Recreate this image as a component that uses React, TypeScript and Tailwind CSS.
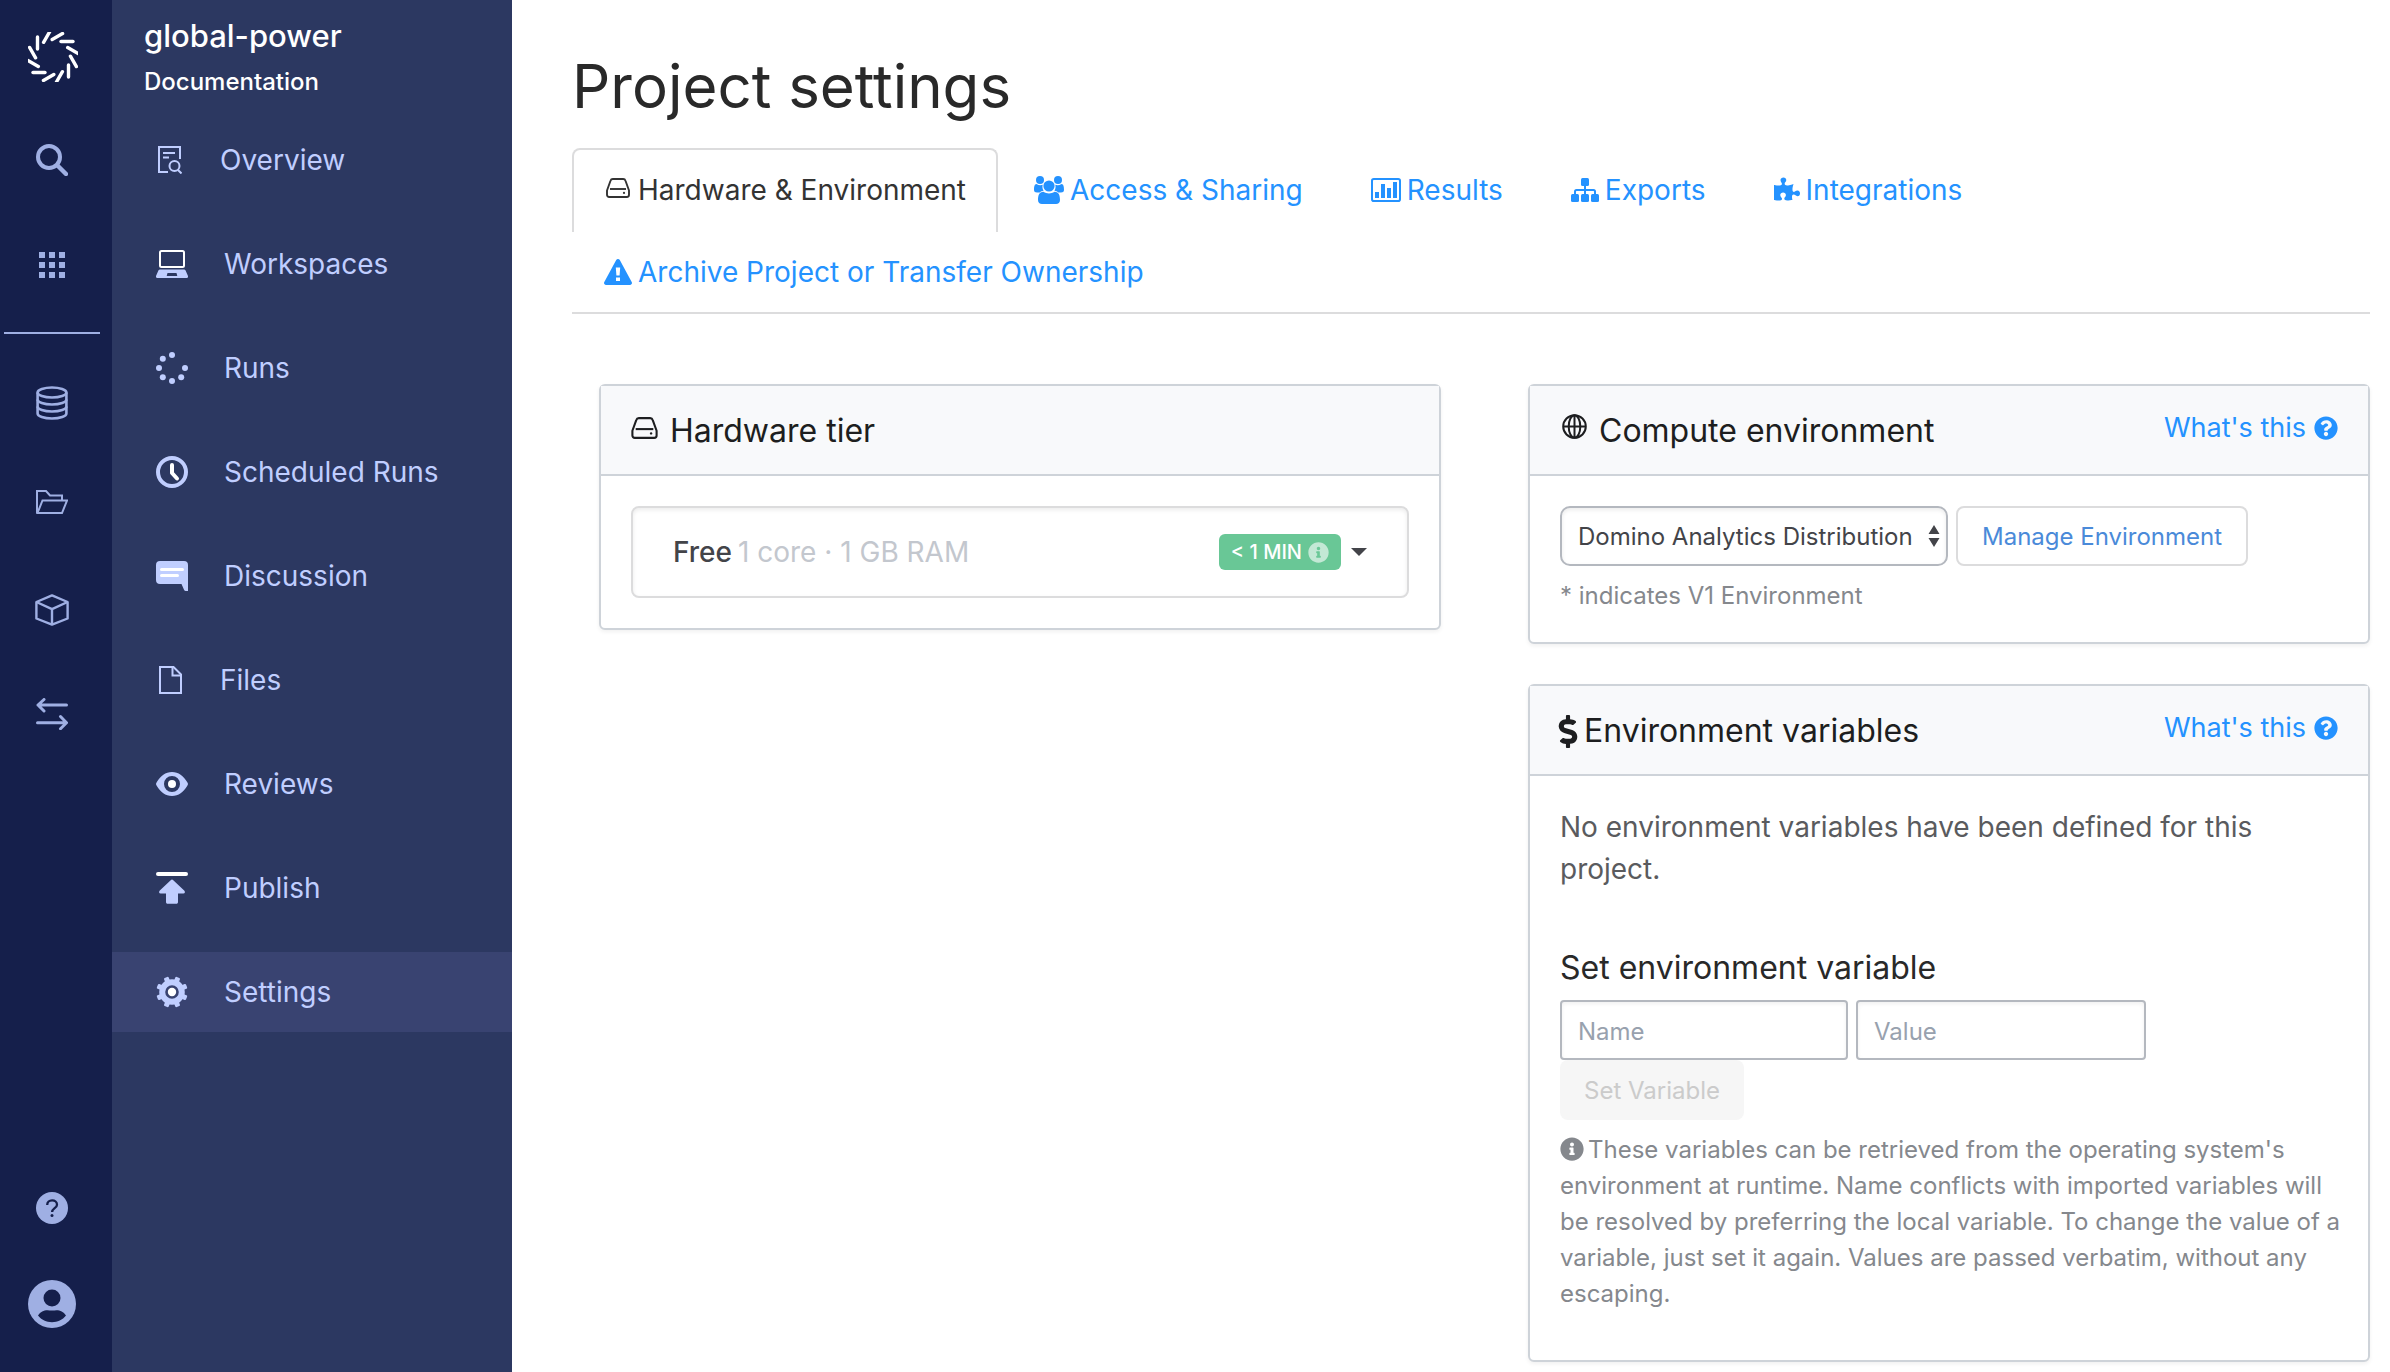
import type { ReactNode } from "react";
import { FaDollarSign, FaInfoCircle, FaPuzzlePiece, FaQuestionCircle } from "react-icons/fa";

/* ---------- logo + rail icons ---------- */

function Logo() {
  const angles = [0, 30, 60, 90, 120, 150, 180, 210, 240, 270, 300, 330];
  return (
    <svg viewBox="0 0 50 50" className="h-[50px] w-[50px]" aria-hidden="true">
      {angles.map((a) => (
        <line
          key={a}
          x1="33"
          y1="9.5"
          x2="45"
          y2="9.5"
          transform={`rotate(${a} 25 25)`}
          stroke="#fff"
          strokeWidth="3.4"
          strokeLinecap="round"
        />
      ))}
    </svg>
  );
}

function SearchIcon() {
  return (
    <svg viewBox="0 0 32 32" className="h-8 w-8" fill="none" stroke="currentColor" aria-hidden="true">
      <circle cx="13" cy="13" r="11" strokeWidth="4" />
      <path d="M21.5 21.5 30 30" strokeWidth="4.4" strokeLinecap="round" />
    </svg>
  );
}

function GridIcon() {
  const steps = [0, 10, 20];
  return (
    <svg viewBox="0 0 26 26" className="h-[26px] w-[26px]" fill="currentColor" aria-hidden="true">
      {steps.map((y) => steps.map((x) => <rect key={`${x}-${y}`} x={x} y={y} width="6" height="6" />))}
    </svg>
  );
}

function DatabaseIcon() {
  return (
    <svg viewBox="0 0 32 34" className="h-[34px] w-8" fill="none" stroke="currentColor" strokeWidth="2.6" aria-hidden="true">
      <ellipse cx="16" cy="6.5" rx="14.4" ry="5" />
      <path d="M1.6 6.5v21c0 2.800 6.400 5 14.400 5s14.400-2.200 14.400-5v-21" />
      <path d="M1.600 13.500c0 2.800 6.400 5 14.400 5s14.400-2.200 14.400-5" />
      <path d="M1.600 20.500c0 2.800 6.400 5 14.400 5s14.400-2.200 14.400-5" />
    </svg>
  );
}

function FolderIcon() {
  return (
    <svg viewBox="0 0 32 24" className="h-6 w-8" fill="none" stroke="currentColor" strokeWidth="2" aria-hidden="true">
      <path d="M1 23V1h9l4 4.500h12V10" />
      <path d="M1.500 23 6.500 10.500h24.500L26 23z" />
    </svg>
  );
}

function CubeIcon() {
  return (
    <svg viewBox="0 0 34 32" className="h-8 w-[34px]" fill="none" stroke="currentColor" strokeWidth="2.4" strokeLinejoin="round" aria-hidden="true">
      <path d="M17 1.400 32.600 8v16.500L17 30.600 1.400 24.500V8z" />
      <path d="M1.400 8 17 15.200 32.600 8M17 15.200v15.400" />
    </svg>
  );
}

function SwapIcon() {
  return (
    <svg viewBox="0 0 32 32" className="h-8 w-8" fill="none" stroke="currentColor" strokeWidth="3" strokeLinecap="round" strokeLinejoin="round" aria-hidden="true">
      <path d="M30.500 7H2M8 1.500 2 7l6 6" />
      <path d="M1.500 24.700H30M24.500 18.500l6 6.200-6 6" />
    </svg>
  );
}

function HelpIcon() {
  return (
    <svg viewBox="0 0 32 32" className="h-8 w-8" fill="none" aria-hidden="true">
      <circle cx="16" cy="16" r="16" fill="currentColor" />
      <path d="M11.200 13c0-2.700 2.100-4.600 4.900-4.600s4.900 1.800 4.900 4.300c0 3.300-4.900 3.600-4.900 7.300" stroke="#151f4b" strokeWidth="2.300" />
      <circle cx="16" cy="23.600" r="1.500" fill="#151f4b" />
    </svg>
  );
}

function AvatarIcon() {
  return (
    <svg viewBox="0 0 48 48" className="h-12 w-12" aria-hidden="true">
      <circle cx="24" cy="24" r="24" fill="currentColor" />
      <circle cx="24" cy="18" r="8.500" fill="#151f4b" />
      <path d="M10 35.500c3.500-5.500 8-6 14-4.900 6-1.100 10.500-.6 14 4.900-3.500 4.500-8.500 6.700-14 6.700s-10.500-2.200-14-6.700z" fill="#151f4b" />
    </svg>
  );
}

/* ---------- project nav icons ---------- */

function OverviewIcon() {
  return (
    <svg viewBox="0 0 24 28" className="h-7 w-6" fill="none" stroke="currentColor" strokeWidth="2" aria-hidden="true">
      <path d="M10 26H1V1h21v12M5 7h12M5 11.500h6" />
      <circle cx="16.500" cy="20" r="5" />
      <path d="m20 24 3.500 3.500" />
    </svg>
  );
}

function WorkspacesIcon() {
  return (
    <svg viewBox="0 0 32 28" className="h-7 w-8" aria-hidden="true">
      <rect x="4" y="1" width="24" height="16" rx="1.500" fill="none" stroke="#fff" strokeWidth="2" />
      <path fillRule="evenodd" fill="currentColor" d="M4 19.500h24c.8 0 1.300.3 1.600 1L32 26c.4 1.200-.2 2-1.500 2h-29C.2 28-.4 27.200 0 26l2.400-5.500c.3-.7.800-1 1.600-1zM11.500 23l-.8 3h10.600l-.8-3z" />
    </svg>
  );
}

function RunsIcon() {
  return (
    <svg viewBox="0 0 32 32" className="h-8 w-8" fill="currentColor" aria-hidden="true">
      <circle cx="16" cy="3" r="3" />
      <circle cx="6.800" cy="6.800" r="3" />
      <circle cx="3" cy="16" r="3" />
      <circle cx="6.800" cy="25.200" r="3" />
      <circle cx="16" cy="29" r="3" />
      <circle cx="25.200" cy="25.200" r="3" />
      <circle cx="29" cy="16" r="3" />
    </svg>
  );
}

function ClockIcon() {
  return (
    <svg viewBox="0 0 32 32" className="h-8 w-8" fill="none" aria-hidden="true">
      <circle cx="16" cy="16" r="14" stroke="currentColor" strokeWidth="4" />
      <path d="M16 9v8l5 5.500" stroke="#fff" strokeWidth="4" strokeLinecap="round" strokeLinejoin="round" />
    </svg>
  );
}

function DiscussionIcon() {
  return (
    <svg viewBox="0 0 32 30" className="h-[30px] w-8" aria-hidden="true">
      <path d="M4 0h24a4 4 0 0 1 4 4v26h-2.500c-.8 0-1.200-.5-1.500-1.200L25.500 23H4a4 4 0 0 1-4-4V4a4 4 0 0 1 4-4z" fill="currentColor" />
      <path d="M5.500 8.500h21M5.500 14.500h16" stroke="#fff" strokeWidth="3" strokeLinecap="round" />
    </svg>
  );
}

function FilesIcon() {
  return (
    <svg viewBox="0 0 24 28" className="h-7 w-6" fill="none" stroke="currentColor" strokeWidth="2" aria-hidden="true">
      <path d="M2 1h13.500L23 8.500V27H2z" />
      <path d="M14.500 1v8.500H23" />
    </svg>
  );
}

function ReviewsIcon() {
  return (
    <svg viewBox="0 0 32 24" className="h-6 w-8" aria-hidden="true">
      <path fillRule="evenodd" fill="currentColor" d="M16 0c6.500 0 11.500 4 15.300 10.300.9 1.500.9 1.900 0 3.400C27.500 20 22.500 24 16 24S4.500 20 .7 13.700c-.9-1.500-.9-1.900 0-3.400C4.500 4 9.500 0 16 0zm0 4a8 8 0 1 0 0 16 8 8 0 0 0 0-16z" />
      <circle cx="16" cy="12" r="4" fill="#fff" />
    </svg>
  );
}

function PublishIcon() {
  return (
    <svg viewBox="0 0 32 32" className="h-8 w-8" aria-hidden="true">
      <path d="M2 2h28" stroke="#fff" strokeWidth="4" strokeLinecap="round" />
      <path d="M17.300 8.200 28.200 18.500c1.200 1.200.9 3-.9 3H22V30c0 1.200-.6 1.800-1.800 1.800h-8.400c-1.200 0-1.800-.6-1.800-1.800v-8.500H4.700c-1.800 0-2.100-1.800-.9-3L14.700 8.200c.9-.9 1.700-.9 2.600 0z" fill="currentColor" />
    </svg>
  );
}

function SettingsIcon() {
  const teeth = [22.5, 67.5, 112.5, 157.5, 202.5, 247.5, 292.5, 337.5];
  return (
    <svg viewBox="0 0 32 32" className="h-8 w-8" aria-hidden="true">
      <circle cx="16" cy="16" r="9.800" fill="none" stroke="currentColor" strokeWidth="6" />
      {teeth.map((a) => (
        <rect key={a} x="13.500" y="0.200" width="5" height="6" rx="1.200" fill="currentColor" transform={`rotate(${a} 16 16)`} />
      ))}
      <circle cx="16" cy="16" r="4.200" fill="#fff" />
    </svg>
  );
}

/* ---------- content icons ---------- */

function DriveIcon({ className }: { className: string }) {
  return (
    <svg viewBox="0 0 24 20" className={className} fill="none" stroke="currentColor" strokeWidth="1.900" strokeLinejoin="round" aria-hidden="true">
      <path d="M1 12.500 4.500 2.800C4.900 1.600 5.700 1 6.800 1h10.400c1.100 0 1.900.6 2.300 1.800L23 12.500v4.300c0 1.200-.9 2.200-2.200 2.200H3.200C1.900 19 1 18 1 16.800z" />
      <path d="M4 11h16" />
      <circle cx="18" cy="14.900" r="1.100" fill="currentColor" stroke="none" />
    </svg>
  );
}

function UsersIcon() {
  return (
    <svg viewBox="0 0 30 28" className="h-7 w-[30px]" fill="currentColor" aria-hidden="true">
      <circle cx="6" cy="4" r="4" />
      <circle cx="24" cy="4" r="4" />
      <path d="M2.500 8c2 1.400 4.500 1.500 6.200.8-.6 2.400-.2 4.300.9 6-1.600.1-2.800.6-3.800 1.700H3c-1.800 0-3-.8-3-2.500C0 11 .4 8 2.500 8zM27.500 8c-2 1.400-4.500 1.500-6.200.8.6 2.400.2 4.300-.9 6 1.600.1 2.800.6 3.800 1.700H27c1.800 0 3-.8 3-2.500 0-3-.4-6-2.500-6z" />
      <circle cx="15" cy="10" r="5.600" />
      <path d="M9.500 15.800c3.300 2.200 7.700 2.200 11 0 4.500 0 5.500 4.200 5.500 8.200 0 2.600-1.600 4-4 4H8c-2.400 0-4-1.400-4-4 0-4 1-8.200 5.500-8.200z" />
    </svg>
  );
}

function ChartIcon() {
  return (
    <svg viewBox="0 0 30 24" className="h-6 w-[30px]" aria-hidden="true">
      <rect x="1" y="1" width="28" height="22" rx="1.800" fill="none" stroke="currentColor" strokeWidth="2" />
      <path d="M4 14h4v6H4zM10 6h4v14h-4zM16 10h4v10h-4zM22 4h4v16h-4z" fill="currentColor" />
    </svg>
  );
}

function SitemapIcon() {
  return (
    <svg viewBox="0 0 28 24" className="h-6 w-7" fill="currentColor" aria-hidden="true">
      <rect x="10" y="0" width="8" height="8" rx="1.500" />
      <rect x="0" y="16" width="8" height="8" rx="1.500" />
      <rect x="10" y="16" width="8" height="8" rx="1.500" />
      <rect x="20" y="16" width="8" height="8" rx="1.500" />
      <path d="M14 7v10M4 17v-3.500c0-.9.600-1.500 1.500-1.500h17c.9 0 1.500.6 1.500 1.500V17" fill="none" stroke="currentColor" strokeWidth="2" />
    </svg>
  );
}

function WarningIcon() {
  return (
    <svg viewBox="0 0 28 26" className="h-[26px] w-7" fill="currentColor" aria-hidden="true">
      <path fillRule="evenodd" d="M15.800 1.100 27.700 23c.8 1.500-.2 3-1.700 3H2C.5 26-.5 24.500.3 23L12.200 1.100c.8-1.400 2.800-1.400 3.600 0zM11.800 8.500l.6 8h3.200l.6-8zM12 18.500V22h4v-3.500z" />
    </svg>
  );
}

function GlobeIcon({ className }: { className: string }) {
  return (
    <svg viewBox="0 0 25 25" className={className} fill="none" stroke="currentColor" strokeWidth="2" aria-hidden="true">
      <circle cx="12.500" cy="12.500" r="11.300" />
      <ellipse cx="12.500" cy="12.500" rx="5.800" ry="11.300" />
      <path d="M1.200 12.500h22.600M12.500 1.200v22.600" />
    </svg>
  );
}

/* ---------- data ---------- */

const NAV = [
  { label: "Overview", icon: <OverviewIcon />, small: true },
  { label: "Workspaces", icon: <WorkspacesIcon /> },
  { label: "Runs", icon: <RunsIcon /> },
  { label: "Scheduled Runs", icon: <ClockIcon /> },
  { label: "Discussion", icon: <DiscussionIcon /> },
  { label: "Files", icon: <FilesIcon />, small: true },
  { label: "Reviews", icon: <ReviewsIcon /> },
  { label: "Publish", icon: <PublishIcon /> },
  { label: "Settings", icon: <SettingsIcon />, active: true },
];

const TABS = [
  { label: "Hardware & Environment", icon: <DriveIcon className="mx-0.5 mb-1 h-5 w-6" />, active: true },
  { label: "Access & Sharing", icon: <UsersIcon /> },
  { label: "Results", icon: <ChartIcon /> },
  { label: "Exports", icon: <SitemapIcon /> },
  { label: "Integrations", icon: <FaPuzzlePiece className="mb-0.5 h-[26px] w-[26px]" /> },
  { label: "Archive Project or Transfer Ownership", icon: <WarningIcon /> },
];

function RailLink({ label, className, children }: { label: string; className: string; children: ReactNode }) {
  return (
    <a href="#" aria-label={label} className={`flex items-center justify-center text-[#9fafe3] ${className}`}>
      {children}
    </a>
  );
}

function Card({ title, icon, help, children }: { title: string; icon: ReactNode; help?: boolean; children: ReactNode }) {
  return (
    <section className="rounded-md border-2 border-[#ced3d9] bg-white shadow-[0_2px_4px_rgba(0,0,0,0.06)]">
      <header className="flex h-[90px] items-center justify-between border-b-2 border-[#ced3d9] bg-[#f8f9fb] px-[30px]">
        <h2 className="flex items-center gap-2 pt-0.5 text-[32px] text-[#1d1e20]">
          {icon}
          {title}
        </h2>
        {help && (
          <a href="#" className="flex items-center gap-2 pb-1 text-[27px] text-[#2492ff]">
            What's this
            <FaQuestionCircle className="h-6 w-6" />
          </a>
        )}
      </header>
      <div className="px-[30px] pt-[30px]">{children}</div>
    </section>
  );
}

export default function App() {
  return (
    <div className="flex min-h-screen bg-white font-['Inter',sans-serif]">
      {/* RAIL */}
      <nav aria-label="Main" className="flex w-28 shrink-0 flex-col bg-[#151f4b] pt-8 pr-2">
        <a href="#" aria-label="Home" className="flex justify-center pl-0.5">
          <Logo />
        </a>
        <RailLink label="Search" className="mt-[62px] h-8">
          <SearchIcon />
        </RailLink>
        <RailLink label="Apps" className="mt-[76px] h-[26px]">
          <GridIcon />
        </RailLink>
        <hr className="mt-[54px] ml-1 w-24 border-t-2 border-[#9fafe3]" />
        <RailLink label="Datasets" className="mt-[52px] h-[34px]">
          <DatabaseIcon />
        </RailLink>
        <RailLink label="Projects" className="mt-[70px] h-6">
          <FolderIcon />
        </RailLink>
        <RailLink label="Environments" className="mt-20 h-8">
          <CubeIcon />
        </RailLink>
        <RailLink label="Transfers" className="mt-[72px] h-8">
          <SwapIcon />
        </RailLink>
        <div className="mt-auto flex flex-col gap-14 pb-11">
          <RailLink label="Help" className="h-8">
            <HelpIcon />
          </RailLink>
          <RailLink label="Account" className="h-12">
            <AvatarIcon />
          </RailLink>
        </div>
      </nav>

      {/* PROJECT NAV */}
      <aside className="w-[400px] shrink-0 bg-[#2c3861]">
        <div className="h-[120px] pt-[14px] pl-8 text-white">
          <div className="text-[31px] leading-[44px] font-medium">global-power</div>
          <div className="text-2xl leading-[48px] font-medium">Documentation</div>
        </div>
        <ul className="flex flex-col gap-6">
          {NAV.map((item) => (
            <li key={item.label}>
              <a
                href="#"
                className={`flex h-20 items-center pl-11 text-[28px] text-[#c0ceff] ${item.active ? "bg-[#394371]" : ""}`}
              >
                <span className={item.small ? "w-16 pl-0.5" : "w-[68px]"}>{item.icon}</span>
                {item.label}
              </a>
            </li>
          ))}
        </ul>
      </aside>

      {/* CONTENT */}
      <main className="min-w-0 flex-1 pt-12 pr-5 pl-[60px]">
        <h1 className="h-[100px] text-[60px] leading-[76px] text-[#292929]">Project settings</h1>
        <ul className="flex flex-wrap border-b-2 border-[#dcdcdd]">
          {TABS.map((tab) => (
            <li key={tab.label} className="mr-1 h-[82px]">
              <a
                href="#"
                className={`flex h-[84px] items-center gap-1.5 rounded-t-lg border-2 border-b-0 px-[30px] pb-0.5 text-[28px] ${
                  tab.active ? "border-[#dcdcdd] text-[#333]" : "border-transparent text-[#2492ff]"
                }`}
              >
                {tab.icon}
                {tab.label}
              </a>
            </li>
          ))}
        </ul>

        <div className="mt-[70px] grid grid-cols-2 items-start gap-[87px] pl-[27px]">
          <Card title="Hardware tier" icon={<DriveIcon className="mr-1 mb-1.5 h-[22px] w-[27px]" />}>
            <button
              type="button"
              className="mb-[30px] flex h-[92px] w-full items-center rounded-lg border-2 border-[#dcdcdd] bg-white px-10 text-[28px] shadow-[inset_0_2px_4px_rgba(0,0,0,0.08)]"
            >
              <span className="font-medium text-[#434449]">Free</span>
              <span className="ml-1.5 text-[#c3c7ce]">1 core · 1 GB RAM</span>
              <span className="ml-auto flex h-9 items-center gap-1.5 rounded-md bg-[#69c796] px-3 text-xl font-medium text-white">
                &lt; 1 MIN
                <FaInfoCircle className="h-[21px] w-[21px] text-[#c3e8d5]" />
              </span>
              <span className="ml-2.5 border-x-8 border-t-8 border-x-transparent border-t-[#434449]" />
            </button>
          </Card>

          <div className="flex flex-col gap-10">
            <Card title="Compute environment" icon={<GlobeIcon className="mr-1 mb-2.5 ml-0.5 h-[25px] w-[25px]" />} help>
              <div className="flex gap-2">
                <div className="relative">
                  <select
                    aria-label="Compute environment"
                    className="h-[60px] w-[388px] appearance-none rounded-[10px] border-2 border-[#b4b8bf] bg-white pt-0.5 pl-4 text-2xl text-[#434449] shadow-[inset_0_2px_4px_rgba(0,0,0,0.08)]"
                  >
                    <option>Domino Analytics Distribution</option>
                  </select>
                  <svg viewBox="0 0 12 22" className="pointer-events-none absolute top-[19px] right-2 h-[22px] w-3" fill="#434449" aria-hidden="true">
                    <path d="M6 0l5.500 9H.5zM6 22l5.500-9H.5z" />
                  </svg>
                </div>
                <button type="button" className="h-[60px] rounded-lg border-2 border-[#dcdcdd] px-6 pt-0.5 text-2xl text-[#4a8ad9]">
                  Manage Environment
                </button>
              </div>
              <p className="pt-3 pb-7 text-2xl leading-9 text-[#85888d]">* indicates V1 Environment</p>
            </Card>

            <Card title="Environment variables" icon={<FaDollarSign className="-mx-0.5 h-[33px] w-5" />} help>
              <p className="text-[28px] leading-[42px] text-[#5a5b5e]">
                No environment variables have been defined for this project.
              </p>
              <h3 className="mt-[60px] h-[50px] text-[32px] leading-9 text-[#292929]">Set environment variable</h3>
              <div className="flex gap-2">
                <input
                  aria-label="Name"
                  placeholder="Name"
                  className="h-[60px] w-[288px] rounded border-2 border-[#b4b8bf] pt-0.5 pl-4 text-2xl shadow-[inset_0_2px_4px_rgba(0,0,0,0.06)] placeholder:text-[#98a1ae]"
                />
                <input
                  aria-label="Value"
                  placeholder="Value"
                  className="h-[60px] w-[290px] rounded border-2 border-[#b4b8bf] pt-0.5 pl-4 text-2xl shadow-[inset_0_2px_4px_rgba(0,0,0,0.06)] placeholder:text-[#98a1ae]"
                />
              </div>
              <button type="button" disabled className="h-[60px] rounded-lg bg-[#f6f6f6] px-6 pt-0.5 text-2xl text-[#cbcbcb]">
                Set Variable
              </button>
              <p className="-mr-2 pt-3 pb-12 text-2xl leading-9 text-[#85888d]">
                <FaInfoCircle className="mr-1 mb-1 inline h-6 w-6" />
                These variables can be retrieved from the operating system's environment at runtime. Name conflicts with
                imported variables will be resolved by preferring the local variable. To change the value of a variable,
                just set it again. Values are passed verbatim, without any escaping.
              </p>
            </Card>
          </div>
        </div>
      </main>
    </div>
  );
}
